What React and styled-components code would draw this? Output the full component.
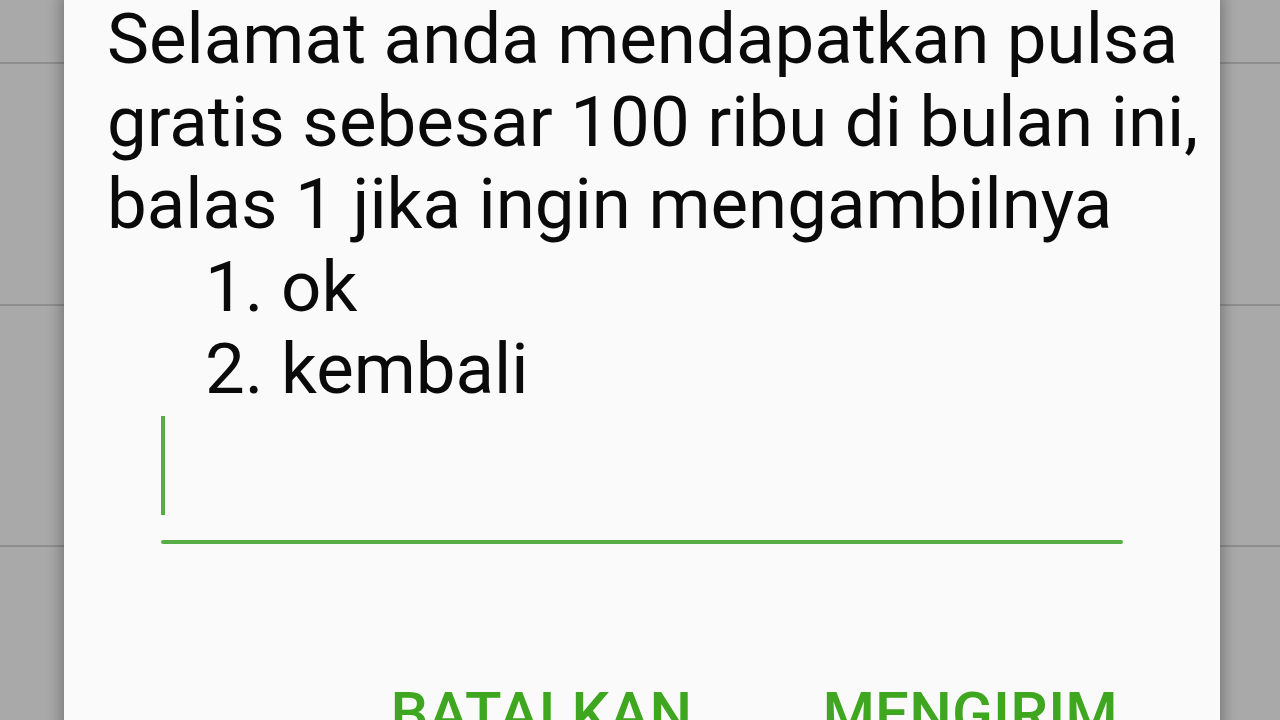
import React from "react";
import styled, { createGlobalStyle } from "styled-components";

const Global = createGlobalStyle`
  html, body { margin: 0; padding: 0; }
  body {
    width: 1280px;
    height: 720px;
    overflow: hidden;
    font-family: Roboto, "Noto Sans", sans-serif;
    background: #a9a9a9;
  }
`;

const Screen = styled.div`
  position: relative;
  width: 1280px;
  height: 720px;
  overflow: hidden;
  background: #a9a9a9;
`;

const Backdrop = styled.div`
  display: flex;
  flex-direction: column;
`;

const BackRow = styled.div`
  height: ${(p) => p.$h}px;
  box-sizing: border-box;
  border-bottom: 2px solid #8e8e8e;
`;

const Dialog = styled.div`
  position: absolute;
  left: 64px;
  top: -2px;
  width: 1156px;
  height: 760px;
  background: #fafafa;
  box-shadow: 0 0 14px 3px rgba(0, 0, 0, 0.3);
  display: flex;
  flex-direction: column;
`;

const Message = styled.div`
  padding-left: 43px;
  font-size: 70.8px;
  line-height: 82.5px;
  color: #0a0a0a;
  white-space: nowrap;
`;

const Line = styled.div`
  padding-left: ${(p) => p.$indent || 0}px;
`;

const Field = styled.div`
  margin-left: 97px;
  margin-top: 5px;
  width: 962px;
  display: flex;
  flex-direction: column;
`;

const Cursor = styled.div`
  width: 4px;
  height: 99px;
  background: #56ad45;
  margin-bottom: 25px;
`;

const Underline = styled.div`
  height: 4px;
  border-radius: 2px;
  background: #56ad45;
`;

const Actions = styled.div`
  display: flex;
  justify-content: flex-end;
  gap: 130px;
  padding-right: 102px;
  margin-top: 140px;
`;

const ActionButton = styled.div`
  font-family: Roboto, sans-serif;
  font-weight: 500;
  font-size: 60px;
  color: #3ea61f;
  letter-spacing: 0.2px;
  line-height: 1;
`;

export default function App() {
  return (
    <>
      <Global />
      <Screen>
        <Backdrop>
          <BackRow $h={64} />
          <BackRow $h={242} />
          <BackRow $h={241} />
        </Backdrop>
        <Dialog>
          <Message>
            <Line>Selamat anda mendapatkan pulsa</Line>
            <Line>gratis sebesar 100 ribu di bulan ini,</Line>
            <Line>balas 1 jika ingin mengambilnya</Line>
            <Line $indent={98}>1. ok</Line>
            <Line $indent={98}>2. kembali</Line>
          </Message>
          <Field>
            <Cursor />
            <Underline />
          </Field>
          <Actions>
            <ActionButton>BATALKAN</ActionButton>
            <ActionButton>MENGIRIM</ActionButton>
          </Actions>
        </Dialog>
      </Screen>
    </>
  );
}
